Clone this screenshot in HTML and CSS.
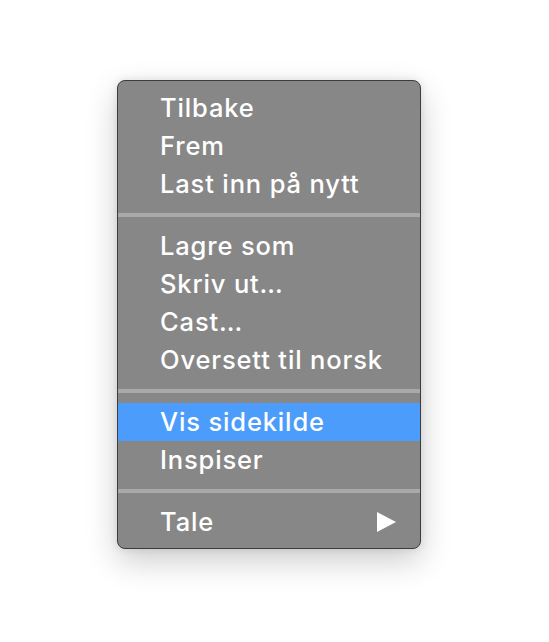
FILE: index.html
```html
<!DOCTYPE html>
<html>
<head>
<meta charset="utf-8">
<link rel="stylesheet" href="styles.css">
</head>
<body>
<div class="stage">
  <div class="menu">
    <div class="item">Tilbake</div>
    <div class="item">Frem</div>
    <div class="item">Last inn på nytt</div>
    <div class="sep"></div>
    <div class="item">Lagre som</div>
    <div class="item">Skriv ut…</div>
    <div class="item">Cast…</div>
    <div class="item">Oversett til norsk</div>
    <div class="sep"></div>
    <div class="item active">Vis sidekilde</div>
    <div class="item">Inspiser</div>
    <div class="sep"></div>
    <div class="item has-sub">
      <span>Tale</span>
      <svg class="arrow" width="19" height="20" viewBox="0 0 19 20"><path d="M0 0 L19 10 L0 20 Z" fill="#fff"/></svg>
    </div>
  </div>
</div>
</body>
</html>
```
FILE: styles.css
```css
html, body {
  margin: 0;
  padding: 0;
  background: #ffffff;
}
.stage {
  padding: 80px 0 93px 117px;
}
.menu {
  width: 304px;
  box-sizing: border-box;
  background: #878787;
  border: 1px solid #3c3c3c;
  border-radius: 8px;
  padding: 8px 0 7px;
  box-shadow: 0 12px 32px rgba(0,0,0,0.2), 0 0 8px rgba(0,0,0,0.1);
  font-family: Inter, "Noto Sans", sans-serif;
  font-weight: 500;
  font-size: 25.5px;
  letter-spacing: 0.85px;
  color: #ffffff;
}
.item {
  height: 38px;
  line-height: 38px;
  padding: 0 24px 0 42px;
  display: flex;
  align-items: center;
  justify-content: space-between;
  white-space: nowrap;
}
.item.active {
  background: #4c9cfb;
}
.sep {
  height: 4px;
  margin: 10px 0;
  background: #a9a9a9;
}
.arrow {
  display: block;
}
```
